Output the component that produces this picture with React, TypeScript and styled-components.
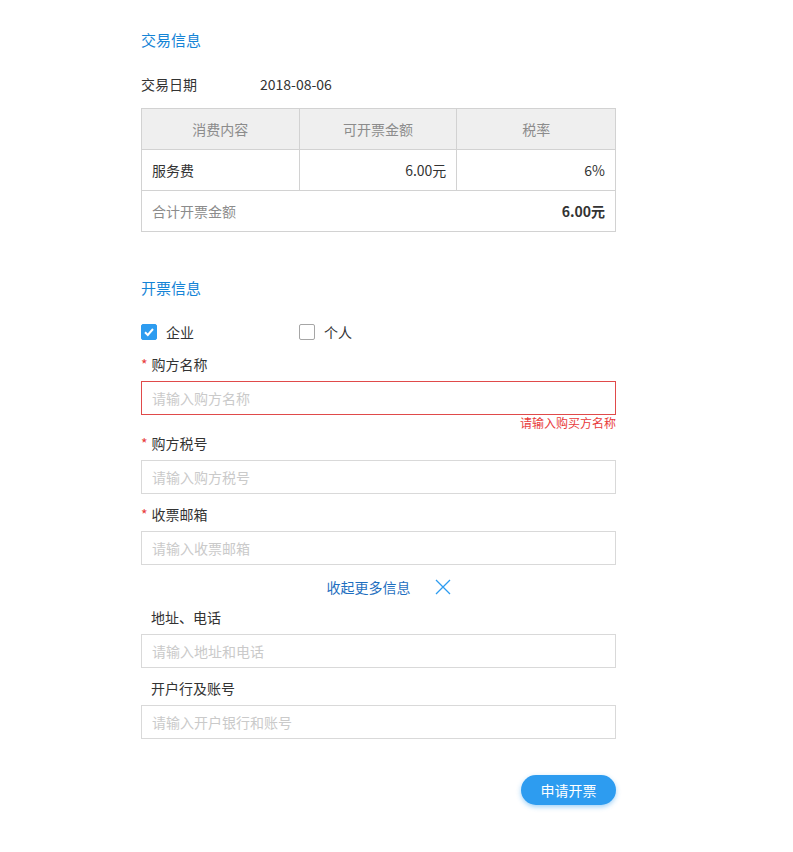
import React from "react";
import styled, { createGlobalStyle } from "styled-components";

const Global = createGlobalStyle`
  body { margin: 0; background: #fff; font-family: "Noto Sans CJK SC", "Noto Sans", sans-serif; font-size: 14px; color: #333; }
`;

const Page = styled.div`
  width: 475px;
  margin-left: 141px;
  padding-top: 28px;
  padding-bottom: 34px;
`;

const SectionTitle = styled.div<{ $top?: number }>`
  color: #1584d6;
  font-size: 15px;
  line-height: 24px;
  margin-top: ${(p) => p.$top ?? 0}px;
`;

const InfoRow = styled.div`
  display: flex;
  margin-top: 20px;
  line-height: 24px;
`;
const InfoLabel = styled.div`
  width: 119px;
`;

const Table = styled.div`
  margin-top: 12px;
  border: 1px solid #d2d2d2;
  display: grid;
  grid-template-columns: 1fr 1fr 1fr;
`;

const Cell = styled.div<{ $head?: boolean; $align?: string; $span?: boolean; $muted?: boolean; $bold?: boolean; $last?: boolean; $bottom?: boolean }>`
  height: 40px;
  display: flex;
  align-items: center;
  justify-content: ${(p) => p.$align ?? "flex-start"};
  padding: 0 10px;
  background: ${(p) => (p.$head ? "#efefef" : "#fff")};
  color: ${(p) => (p.$head || p.$muted ? "#8c8c8c" : "#333")};
  font-weight: ${(p) => (p.$bold ? 700 : 400)};
  border-right: ${(p) => (p.$last ? "none" : "1px solid #d2d2d2")};
  border-bottom: ${(p) => (p.$bottom ? "none" : "1px solid #d2d2d2")};
  ${(p) => (p.$span ? "grid-column: span 2; border-right: none;" : "")}
`;

const CheckRow = styled.div`
  display: flex;
  margin-top: 20px;
  height: 24px;
  align-items: center;
`;
const CheckItem = styled.label`
  width: 158px;
  display: flex;
  align-items: center;
  gap: 9px;
`;
const Box = styled.span<{ $on?: boolean }>`
  width: 16px;
  height: 16px;
  box-sizing: border-box;
  border-radius: 2px;
  border: 1px solid ${(p) => (p.$on ? "#2d9cf0" : "#a6a6a6")};
  background: ${(p) => (p.$on ? "#2d9cf0" : "#fff")};
  display: flex;
  align-items: center;
  justify-content: center;
`;

const Field = styled.div<{ $indent?: boolean }>`
  margin-top: 10px;
`;
const Label = styled.div<{ $indent?: boolean }>`
  line-height: 20px;
  padding-left: ${(p) => (p.$indent ? 10 : 0)}px;
  margin-bottom: 7px;
`;
const Star = styled.span`
  color: #e83b3b;
  margin-right: 4px;
`;
const Input = styled.input<{ $error?: boolean }>`
  display: block;
  width: 100%;
  box-sizing: border-box;
  height: 34px;
  border: 1px solid ${(p) => (p.$error ? "#e04a4a" : "#d9d9d9")};
  padding: 0 10px;
  font: inherit;
  outline: none;
  &::placeholder { color: #cacaca; }
`;
const Error = styled.div`
  text-align: right;
  color: #e83b3b;
  font-size: 12px;
  line-height: 16px;
  margin-bottom: -8px;
`;

const Toggle = styled.div`
  margin-top: 12px;
  display: flex;
  justify-content: center;
  align-items: center;
  gap: 24px;
  color: #1f6fc0;
  line-height: 20px;
  padding-left: 20px;
  margin-bottom: 4px;
`;

const Footer = styled.div`
  display: flex;
  justify-content: flex-end;
  margin-top: 36px;
`;
const Button = styled.button`
  width: 95px;
  height: 30px;
  border: none;
  border-radius: 15px;
  background: #2d9cf0;
  color: #fff;
  font: inherit;
  font-size: 14px;
  box-shadow: 0 2px 5px rgba(45, 156, 240, 0.45);
`;

export default function App() {
  return (
    <>
      <Global />
      <Page>
        <SectionTitle>交易信息</SectionTitle>
        <InfoRow>
          <InfoLabel>交易日期</InfoLabel>
          <div>2018-08-06</div>
        </InfoRow>
        <Table>
          <Cell $head $align="center">消费内容</Cell>
          <Cell $head $align="center">可开票金额</Cell>
          <Cell $head $align="center" $last>税率</Cell>
          <Cell>服务费</Cell>
          <Cell $align="flex-end">6.00元</Cell>
          <Cell $align="flex-end" $last>6%</Cell>
          <Cell $span $muted $bottom>合计开票金额</Cell>
          <Cell $align="flex-end" $bold $last $bottom>6.00元</Cell>
        </Table>

        <SectionTitle $top={44}>开票信息</SectionTitle>
        <CheckRow>
          <CheckItem>
            <Box $on>
              <svg width="12" height="12" viewBox="0 0 12 12"><path d="M2 6.2 L4.8 9 L10 3" stroke="#fff" strokeWidth="2" fill="none" /></svg>
            </Box>
            企业
          </CheckItem>
          <CheckItem>
            <Box />
            个人
          </CheckItem>
        </CheckRow>
        <Field>
          <Label><Star>*</Star>购方名称</Label>
          <Input $error placeholder="请输入购方名称" />
          <Error>请输入购买方名称</Error>
        </Field>
        <Field>
          <Label><Star>*</Star>购方税号</Label>
          <Input placeholder="请输入购方税号" />
        </Field>
        <Field>
          <Label><Star>*</Star>收票邮箱</Label>
          <Input placeholder="请输入收票邮箱" />
        </Field>
        <Toggle>
          <span>收起更多信息</span>
          <svg width="16" height="16" viewBox="0 0 16 16"><path d="M1 1 L15 15 M15 1 L1 15" stroke="#2d9cf0" strokeWidth="1.3" /></svg>
        </Toggle>
        <Field>
          <Label $indent>地址、电话</Label>
          <Input placeholder="请输入地址和电话" />
        </Field>
        <Field>
          <Label $indent>开户行及账号</Label>
          <Input placeholder="请输入开户银行和账号" />
        </Field>
        <Footer>
          <Button>申请开票</Button>
        </Footer>
      </Page>
    </>
  );
}
